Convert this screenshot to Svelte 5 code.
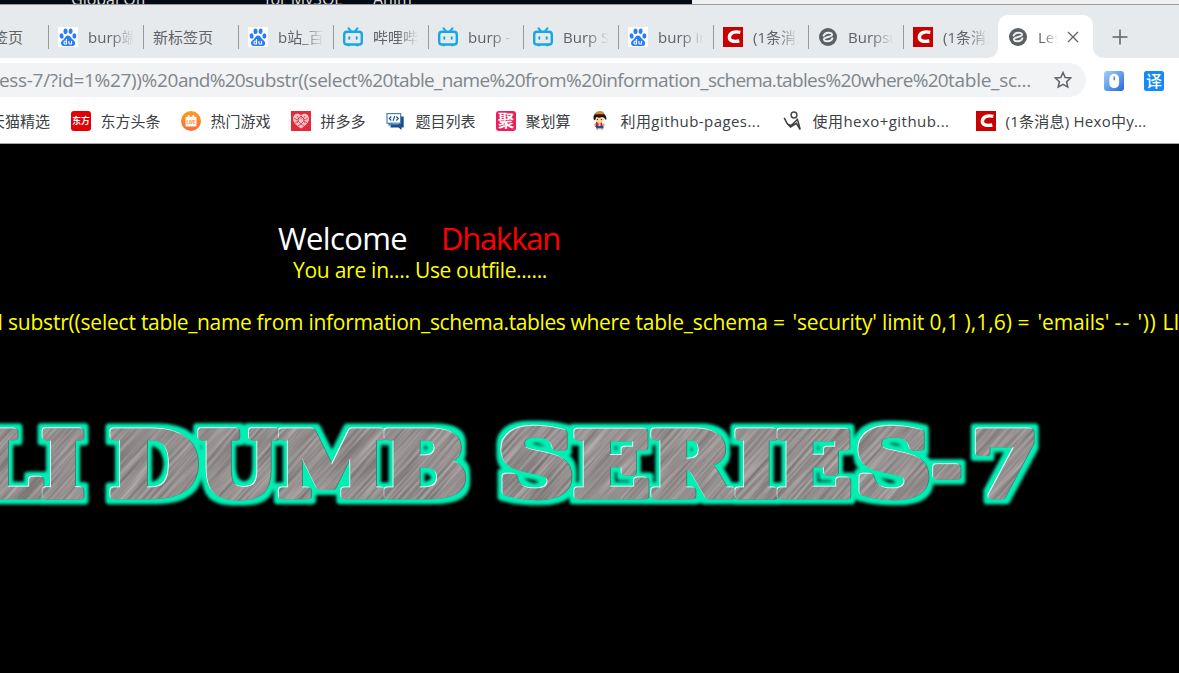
<script>
  const tabs = [
    { icon: '', text: '新标签页' },
    { icon: 'baidu', text: 'burp端口' },
    { icon: '', text: '新标签页' },
    { icon: 'baidu', text: 'b站_百度' },
    { icon: 'bili', text: '哔哩哔哩' },
    { icon: 'bili', text: 'burp - 搜' },
    { icon: 'bili', text: 'Burp Suite' },
    { icon: 'baidu', text: 'burp intruder' },
    { icon: 'csdn', text: '(1条消息)' },
    { icon: 'globe', text: 'Burpsuite' },
    { icon: 'csdn', text: '(1条消息)' }
  ];

  const bookmarks = [
    { icon: 'east', text: '东方头条', fit: 60, width: 110 },
    { icon: 'live', text: '热门游戏', fit: 60, width: 110 },
    { icon: 'heart', text: '拼多多', fit: 45, width: 95 },
    { icon: 'code', text: '题目列表', fit: 60, width: 110 },
    { icon: 'ju', text: '聚划算', fit: 45, width: 95 },
    { icon: 'luffy', text: '利用github-pages...', fit: 140, width: 192 },
    { icon: 'figure', text: '使用hexo+github...', fit: 137, width: 193 },
    { icon: 'csdn', text: '(1条消息) Hexo中y...', fit: 141, width: 180 }
  ];

  // text runs with their advance widths
  const address = [
    ['ess-7/?id=1%27))%20', 179], ['and%20', 67], ['substr((select%20', 148], ['table_name%20', 132],
    ['from%20', 77], ['information_', 106], ['schema.', 68], ['tables%20', 85], ['where%20', 87], ['table_sc...', 83]
  ];
  const query = [
    ['substr((select ', 133], ['table_name ', 115.5], ['from ', 52], ['information_', 121.5], ['schema.tables ', 140.5],
    ['where ', 65], ['table_schema ', 137.5], ['= ', 19.5], ["'security' ", 89.5], ['limit ', 47.5], ['0,1 ', 35],
    ['),1,6) ', 53], ['= ', 20], ["'emails' ", 77], ['-- ', 23], ["')) ", 25], ['LI', 17]
  ];

  // letter, left edge, right edge, top, bottom of each banner glyph
  const letters = [
    ['L', -28, 44, 428, 499], ['I', 42, 84, 428, 499],
    ['D', 110, 198, 428, 499], ['U', 198, 280, 428, 500], ['M', 279, 385, 428, 499], ['B', 384, 465, 428, 499],
    ['S', 501, 572, 426, 500], ['E', 574, 649, 428, 499], ['R', 651, 736, 428, 499], ['I', 735, 778, 428, 499],
    ['E', 777, 851, 428, 499], ['S', 858, 929, 426, 500], ['-', 933, 961, 464, 480], ['7', 975, 1034, 428, 499]
  ];

  const ctx = document.createElement('canvas').getContext('2d');
  ctx.font = 'bold 100px "DejaVu Serif"';
  const inset = 3.5;
  const glyphs = letters.map(([ch, l, r, t, b]) => {
    const m = ctx.measureText(ch);
    const sx = (r - l - 2 * inset) / (m.actualBoundingBoxRight + m.actualBoundingBoxLeft);
    const sy = (b - t - 2 * inset) / (m.actualBoundingBoxAscent + m.actualBoundingBoxDescent);
    const x = l + inset + m.actualBoundingBoxLeft * sx;
    const y = t + inset - 410 + m.actualBoundingBoxAscent * sy;
    return { ch, transform: `translate(${x} ${y}) scale(${sx} ${sy})` };
  });

  function fit(node, width) {
    const n = [...node.textContent].length;
    node.style.letterSpacing = `${(width - node.getBoundingClientRect().width) / n}px`;
  }
</script>

{#snippet icon(name)}
  <svg class="icon" viewBox="0 0 20 20">
    {#if name === 'baidu'}
      <rect width="20" height="20" fill="#fff" />
      <g fill="#2b7cf7">
        <ellipse cx="3.6" cy="9" rx="2" ry="2.7" transform="rotate(-10 3.6 9)" />
        <ellipse cx="7.5" cy="4.3" rx="2" ry="2.8" />
        <ellipse cx="12.6" cy="4.3" rx="2" ry="2.8" transform="rotate(10 12.6 4.3)" />
        <ellipse cx="16.4" cy="9" rx="2" ry="2.7" />
        <path d="M10 8.6c2.2 0 2.8 2 4.4 3.7 1.5 1.5 3.2 2.4 2.7 4.6-.6 2.6-3.4 2-7.1 2s-6.2.6-6.9-2c-.5-2.2 1.1-3.2 2.7-4.7C7.3 10.7 7.8 8.6 10 8.6Z" />
      </g>
      <path d="M8.5 12v5H6.7q-1.5-1.4 0-2.7h1.8M10.9 14v2q.1 1.2 1.3 1h1.3v-3" fill="none" stroke="#fff" stroke-width="1.1" />
    {:else if name === 'bili'}
      <path d="m5.5 1.2 2.2 2.6m6.8-2.6-2.2 2.6" stroke="#16a8e0" stroke-width="2" stroke-linecap="round" />
      <rect x="1.2" y="4.8" width="17.6" height="12.7" rx="2.8" fill="none" stroke="#16a8e0" stroke-width="2.4" />
      <path d="M4.5 17.5h2.3v1.7H4.5zm8.7 0h2.3v1.7h-2.3z" fill="#16a8e0" />
      <path d="M6.3 10.2v1.6m7.4-1.6v1.6" stroke="#16a8e0" stroke-width="2" stroke-linecap="round" />
    {:else if name === 'csdn'}
      <rect width="20" height="20" fill="#c80000" />
      <path d="M17.3 5.3c-6.4-1.3-10.5.8-10.9 4.5-.3 4 3.700 5.300 9.900 4.200" fill="none" stroke="#fff" stroke-width="3.4" />
    {:else if name === 'globe'}
      <circle cx="10" cy="10" r="9" fill="#5b6064" />
      <path d="M5.600 8.700C7 4.900 14 4.900 14.100 7.700 14.200 9.900 5.800 10.100 5.900 12.300 6.100 15.100 13 15.100 14.400 11.300" fill="none" stroke="#eceff1" stroke-width="1.900" stroke-linecap="round" />
    {:else if name === 'east'}
      <rect width="20" height="20" rx="3" fill="#e20005" />
      <text x="10" y="13.2" text-anchor="middle" font-size="8.8" font-weight="700" fill="#fff">东方</text>
    {:else if name === 'live'}
      <circle cx="10" cy="10" r="10" fill="url(#live-bg)" />
      <path d="M5.5 5.8h1.3V4h1.8v1.8h2.8V4h1.8v1.8h1.3q1 0 1 1v7.700q0 1-1 1h-9q-1 0-1-1V6.800q0-1 1-1Z" fill="#fff8ed" />
      <text x="10" y="13" text-anchor="middle" font-size="4.2" font-weight="700" fill="#f68533">LIVE</text>
      <defs><linearGradient id="live-bg" x2="0" y2="1"><stop stop-color="#fd9c1e" /><stop offset="1" stop-color="#f76b3c" /></linearGradient></defs>
    {:else if name === 'heart'}
      <rect width="20" height="20" fill="#e32a3a" />
      <path d="M10 4.5C7.200 1 1.700 3.200 2 7.900c.2 3.900 4.200 7 8 9.600 3.800-2.600 7.800-5.700 8-9.600.3-4.700-5.200-6.900-8-3.400Z" fill="#ffc4c6" />
      <path d="m3 7 3 2 4-4 4 4 3-2M4 12l3-2 3 3 3-3 3 2M7 15l3-2 3 2M6 5l2 3-2 4m8-7-2 3 2 4M10 5v3" fill="none" stroke="#e32a3a" stroke-width=".8" />
    {:else if name === 'code'}
      <path d="M13 5.500h4.700v11h-2.200v2.500l-3-2.500H4.500v-3.200H13Z" fill="#174e8d" />
      <rect x="1" y="2.600" width="13.600" height="9.600" fill="#fff" stroke="#4d80b5" stroke-width="1.200" />
      <path d="M2.500 12h5l-5 3.200Z" fill="#4d80b5" />
      <path d="m5.300 5.500-2 2 2 2m5-4 2 2-2 2M8.700 5.200l-1.600 4.600" fill="none" stroke="#174e8d" stroke-width="1.100" />
    {:else if name === 'ju'}
      <rect width="20" height="20" rx="3" fill="#ed1f58" />
      <text x="10" y="16" text-anchor="middle" font-size="16.5" font-weight="700" fill="#fff">聚</text>
    {:else if name === 'luffy'}
      <path d="M5 9h6v4l1 3H4l1-3Z" fill="#c5232c" />
      <circle cx="8.500" cy="7.500" r="4.600" fill="#ffd69b" />
      <path d="M2.500 8Q1.500 2 8.500 2t7 6q-1 2-2-1l-2-1-3 .7L5 6q-.5 5-2.500 2Z" fill="#151515" />
      <path d="M4 2.700Q5 0 9 0t4 2.700l-4.500.6Z" fill="#c98d2c" />
      <path d="M3.500 3.200q5 1.300 9.800 0" stroke="#8c2017" stroke-width="1" fill="none" />
      <path d="M6.400 8v1m4-1v1" stroke="#222" />
      <path d="M5 14.500h7.500v3H5Z" fill="#284d96" />
      <path d="M6.500 17v2m4.500-2v2M5 12.500l-1.500 2m8-2 2 2" stroke="#d79458" stroke-width="1.400" />
      <path d="M7.500 12h2v3h-2Z" fill="#ffd69b" />
    {:else if name === 'figure'}
      <circle cx="11" cy="4" r="2.900" fill="none" stroke="#4b4b4b" stroke-width="1.500" />
      <path d="M14 7.500 15.500 12l1.700 6.500-3.900-6.200L7.500 16 4.200 12.500 1.200 6.800M4 13l4 1.500 7-6.500" fill="none" stroke="#3e3e3e" stroke-width="1.500" />
    {:else if name === 'mouse'}
      <rect width="20" height="20" rx="3" fill="url(#mouse-bg)" />
      <rect x="5.300" y="2.800" width="9.800" height="14.500" rx="4.900" fill="#fff" />
      <path d="M10.200 5.500v3.700" stroke="#4d86e6" stroke-width="1.500" />
      <defs><linearGradient id="mouse-bg" x2="1" y2="1"><stop stop-color="#a3d0fc" /><stop offset=".55" stop-color="#5b99ed" /><stop offset="1" stop-color="#2864d8" /></linearGradient></defs>
    {:else if name === 'translate'}
      <rect width="20" height="20" rx="2.500" fill="#1389fa" />
      <text x="10" y="15.900" text-anchor="middle" font-size="16" font-weight="500" fill="#fff">译</text>
    {/if}
  </svg>
{/snippet}

<div class="screen">
  <div class="behind">
    <div class="editor"><span class="w1">Global Off</span><span class="w2">for MySQL</span><span>Anim</span></div>
  </div>

  <div class="tabs">
    {#each tabs as tab}
      <div class="tab">
        {#if tab.icon}{@render icon(tab.icon)}{/if}
        <span class="label" class:plain={!tab.icon}>{tab.text}</span>
      </div>
    {/each}
    <div class="tab active">
      {@render icon('globe')}
      <span class="label">Less-7</span>
      <svg class="close" viewBox="0 0 12 12"><path d="m1 1 10 10M11 1 1 11" stroke="#5f6368" stroke-width="1.3" /></svg>
    </div>
    <svg class="plus" viewBox="0 0 16 16"><path d="M8 .5v15M.5 8h15" stroke="#5f6368" stroke-width="1.5" /></svg>
  </div>

  <div class="toolbar">
    <div class="address">
      <div class="url">{#each address as [text, width]}<span use:fit={width}>{text}</span>{/each}</div>
      <svg class="star" viewBox="0 0 18 18"><path d="m9 1.500 2.200 5 5.500.5-4.100 3.700 1.200 5.400L9 13.300l-4.800 2.800 1.200-5.400L1.300 7l5.500-.5Z" fill="none" stroke="#5f6368" stroke-width="1.5" /></svg>
    </div>
    {@render icon('mouse')}
    {@render icon('translate')}
  </div>

  <div class="bookmarks">
    <div class="bookmark first"><span>天猫精选</span></div>
    {#each bookmarks as b}
      <div class="bookmark" style:width="{b.width}px">
        {@render icon(b.icon)}<span use:fit={b.fit}>{b.text}</span>
      </div>
    {/each}
  </div>

  <main>
    <div class="welcome"><span use:fit={129}>Welcome</span><span class="name" use:fit={119}>Dhakkan</span></div>
    <div class="message"><span use:fit={122}>{'You are in.... '}</span><span use:fit={132}>Use outfile......</span></div>
    <div class="query"><span class="edge">d</span><div>{#each query as [text, width]}<span use:fit={width}>{text}</span>{/each}</div></div>
    <svg class="banner" width="1179" height="110" viewBox="0 0 1179 110">
      <defs>
        <filter id="glow" filterUnits="userSpaceOnUse" x="-40" y="0" width="1260" height="110" color-interpolation-filters="sRGB">
          <feMorphology in="SourceAlpha" operator="dilate" radius="4.5" result="wide" />
          <feGaussianBlur in="wide" stdDeviation="1.7" result="soft" />
          <feFlood flood-color="#00f0b4" /><feComposite in2="soft" operator="in" />
        </filter>
        <filter id="bevel" filterUnits="userSpaceOnUse" x="-40" y="0" width="1260" height="110" color-interpolation-filters="sRGB">
          <feOffset in="SourceAlpha" dx="-1" dy="-1" result="up" />
          <feFlood flood-color="#e8ffff" /><feComposite in2="up" operator="in" result="light" />
          <feOffset in="SourceAlpha" dx="1" dy="0" result="down" />
          <feFlood flood-color="#4d7a70" /><feComposite in2="down" operator="in" result="dark" />
          <feMerge><feMergeNode in="dark" /><feMergeNode in="light" /><feMergeNode in="SourceGraphic" /></feMerge>
        </filter>
        <filter id="brushed" filterUnits="userSpaceOnUse" x="-100" y="-50" width="1000" height="1100" color-interpolation-filters="sRGB">
          <feTurbulence type="fractalNoise" baseFrequency="0.012 0.35" numOctaves="3" seed="4" />
          <feColorMatrix values=".7 0 0 0 .25  .7 0 0 0 .225  .7 0 0 0 .225  0 0 0 0 1" />
        </filter>
        <mask id="ink" maskUnits="userSpaceOnUse" x="-40" y="0" width="1260" height="110">
          {#each glyphs as g}<text class="solid" transform={g.transform}>{g.ch}</text>{/each}
        </mask>
      </defs>
      <g filter="url(#glow)">{#each glyphs as g}<text class="face" transform={g.transform}>{g.ch}</text>{/each}</g>
      {#each glyphs as g}<g filter="url(#bevel)"><text class="face" transform={g.transform}>{g.ch}</text></g>{/each}
      <g mask="url(#ink)" opacity=".5"><g transform="rotate(-48)"><rect x="-100" y="-50" width="1000" height="1100" filter="url(#brushed)" /></g></g>
    </svg>
  </main>
</div>

<style>
  :global(body) { margin: 0; background: #000; overflow: hidden; }
  .screen { width: 1179px; height: 673px; overflow: hidden; display: flex; flex-direction: column; background: #000; font-family: "Open Sans", "Noto Sans CJK SC", sans-serif; white-space: nowrap; }
  .icon { width: 20px; height: 20px; flex: none; display: block; font-family: "Noto Sans CJK SC", sans-serif; }
  .behind { height: 4px; flex: none; overflow: hidden; background: #f0f0f0; border-bottom: 1px solid #9b9b9b; }
  .editor { width: 692px; height: 4px; box-sizing: border-box; padding-left: 71px; background: #020b14; color: #ddd; font-size: 16px; line-height: 20px; display: flex; overflow: hidden; }
  .editor span { margin-top: -11px; }
  .w1 { width: 194px; }
  .w2 { width: 108px; }
  .tabs { height: 53px; flex: none; display: flex; background: #e7eaed; }
  .tab { width: 95px; height: 24px; flex: none; box-sizing: border-box; margin-top: 20px; padding-left: 9px; border-right: 1.5px solid #969899; display: flex; align-items: center; gap: 10px; font-size: 15px; color: #5f6368; }
  .tab:first-child { margin-left: -46px; }
  .tab:nth-child(11) { border-right-color: transparent; }
  .label { width: 47px; overflow: hidden; line-height: 24px; mask-image: linear-gradient(90deg, #000 50%, transparent 98%); }
  .label.plain { width: 64px; mask-image: none; }
  .active { position: relative; height: 43px; margin: 10px 0 0 -1px; padding-left: 10px; border: 0; border-radius: 10px 10px 0 0; background: #fff; }
  .active .label { width: 20px; mask-image: linear-gradient(90deg, #000 25%, transparent 100%); }
  .active::before, .active::after { content: ""; position: absolute; bottom: 0; width: 10px; height: 10px; }
  .active::before { left: -10px; background: radial-gradient(circle at 0 0, transparent 9.5px, #fff 10px); }
  .active::after { right: -10px; background: radial-gradient(circle at 100% 0, transparent 9.5px, #fff 10px); }
  .close { width: 12px; height: 12px; margin-left: -1px; }
  .plus { width: 16px; height: 16px; margin: 24px 0 0 19px; }
  .toolbar { height: 40px; flex: none; display: flex; align-items: center; background: #fff; gap: 20px; }
  .toolbar > .icon { margin-top: 5px; }
  .address { width: 1086px; height: 34px; margin-top: 4px; margin-right: -2.5px; display: flex; align-items: center; background: #f1f3f4; border-radius: 0 17px 17px 0; flex: none; }
  .url { font-size: 19px; line-height: 34px; color: #80868b; margin-left: -1px; white-space: pre; }
  .star { width: 18px; height: 18px; margin-left: 23px; flex: none; }
  .bookmarks { height: 46px; flex: none; box-sizing: border-box; padding-top: 1px; border-bottom: 1px solid #aaa; background: #fff; display: flex; align-items: center; font-size: 15px; color: #3c4043; }
  .bookmark { display: flex; align-items: center; gap: 9.5px; flex: none; }
  .bookmark span { margin-top: -1px; }
  .first { width: 81px; margin-left: -10px; }
  main { flex: 1; overflow: hidden; display: flex; flex-direction: column; background: #000; }
  .welcome { display: flex; gap: 34px; padding: 74px 0 0 278px; font-size: 31px; line-height: 40px; height: 40px; color: #fff; }
  .name { color: #f00; }
  .message { padding-left: 293px; margin-top: -3px; font-size: 21px; line-height: 30px; height: 30px; color: #ff0; white-space: pre; }
  .query { display: flex; gap: 6px; margin: 22px 0 0 -10px; height: 30px; line-height: 30px; font-size: 21px; color: #ff0; white-space: pre; }
  .edge { width: 12px; text-align: right; }
  .banner { margin-top: 73px; flex: none; font: bold 100px "DejaVu Serif", serif; }
  .face, .solid { stroke-width: 7px; stroke-linejoin: round; vector-effect: non-scaling-stroke; }
  .face { fill: #918b8b; stroke: #918b8b; }
  .solid { fill: #fff; stroke: #fff; }
</style>
